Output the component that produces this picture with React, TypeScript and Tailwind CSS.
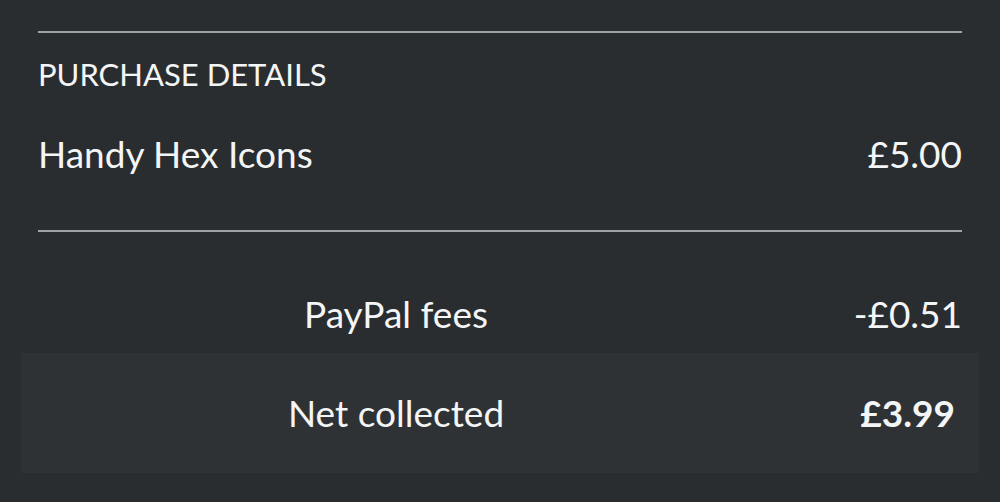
import React from "react";

export default function App() {
  return (
    <div className="w-[1000px] h-[502px] bg-[#2a2d2f] text-[#f4f5f6] overflow-hidden" style={{ fontFamily: "Lato, 'Open Sans', sans-serif" }}>
      <div className="pt-[31px] px-[38px]">
        <div className="h-[2px] bg-[#9fa3a7]" />
        <div className="pt-[23px] text-[31px] leading-[36px]">PURCHASE DETAILS</div>
        <div className="flex justify-between items-baseline pt-[40px] text-[37px] leading-[44px]">
          <span>Handy Hex Icons</span>
          <span>£5.00</span>
        </div>
        <div className="mt-[54px] h-[2px] bg-[#9fa3a7]" />
      </div>
      <div className="mt-[60px] px-[38px] flex items-baseline text-[37px] leading-[44px]">
        <span className="w-[716px] text-center">PayPal fees</span>
        <span className="flex-1 text-right">-£0.51</span>
      </div>
      <div className="mx-[21px] mt-[17px] h-[120px] bg-[#2f3234] flex items-center pr-[24px] pl-[17px] text-[37px] leading-[44px]">
        <span className="w-[716px] text-center">Net collected</span>
        <span className="flex-1 text-right font-bold">£3.99</span>
      </div>
    </div>
  );
}
